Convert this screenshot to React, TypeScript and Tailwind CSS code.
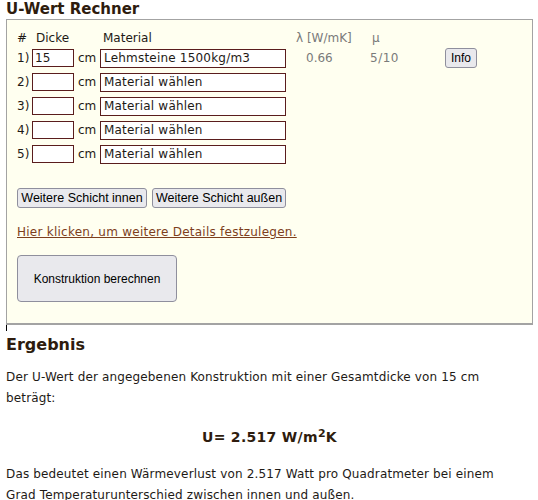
import React from "react";

const font = { fontFamily: '"DejaVu Sans", Verdana, sans-serif' };
const btnFont = { fontFamily: '"Liberation Sans", Arial, sans-serif' };

function Row({ n, value, material, lambda, mu, info }: { n: number; value: string; material: string; lambda?: string; mu?: string; info?: boolean }) {
  return (
    <div className="flex h-[24px] items-center text-[12px] text-[#1e1a16]">
      <div className="w-[15px] text-left">{n})</div>
      <div className="flex h-[18px] w-[42px] items-center border border-[#5a1d1d] bg-white px-[2px] text-[12px]">{value}</div>
      <div className="w-[26px] pl-[4px]">cm</div>
      <div className="flex h-[19px] w-[186px] items-center border border-[#5a1d1d] bg-white px-[3px] text-[12px] tracking-[0.2px]">{material}</div>
      <div className="w-[84px] pl-[20px] text-[#7a7a7a]">{lambda ?? ""}</div>
      <div className="w-[75px] text-[#7a7a7a] tracking-[0.5px]">{mu ?? ""}</div>
      {info && (
        <div className="flex h-[20px] w-[32px] items-center justify-center rounded-[3px] border border-[#8f8f9d] bg-[#e9e9ed] text-[12px] text-black" style={btnFont}>
          Info
        </div>
      )}
    </div>
  );
}

export default function App() {
  return (
    <div className="h-[500px] w-[538px] overflow-hidden bg-white pl-[6px] text-[#1e1a16]" style={font}>
      <h1 className="h-[19px] text-[15px] font-bold leading-[19px] text-[#2e1c0e]">U-Wert Rechner</h1>
      <div className="w-[527px] border border-b-2 border-[#a3a3a3] bg-[#fffff0] pb-[21px] pl-[10px] pt-[10px]">
        <div className="flex h-[16px] items-center text-[12px] text-[#1e1a16]">
          <div className="w-[19px]">#</div>
          <div className="w-[67px]">Dicke</div>
          <div className="w-[193px]">Material</div>
          <div className="w-[76px] text-[#7a7a7a]">λ [W/mK]</div>
          <div className="text-[#7a7a7a]">µ</div>
        </div>
        <Row n={1} value="15" material="Lehmsteine 1500kg/m3" lambda="0.66" mu="5/10" info />
        <Row n={2} value="" material="Material wählen" />
        <Row n={3} value="" material="Material wählen" />
        <Row n={4} value="" material="Material wählen" />
        <Row n={5} value="" material="Material wählen" />
        <div className="mt-[22px] flex gap-[5px]" style={btnFont}>
          <div className="flex h-[20px] w-[130px] items-center justify-center whitespace-nowrap rounded-[3px] border border-[#8f8f9d] bg-[#e9e9ed] text-[12.5px] text-black">Weitere Schicht innen</div>
          <div className="flex h-[20px] w-[134px] items-center justify-center whitespace-nowrap rounded-[3px] border border-[#8f8f9d] bg-[#e9e9ed] text-[12.5px] text-black">Weitere Schicht außen</div>
        </div>
        <div className="mt-[16px] h-[16px] text-[12px] leading-[16px] tracking-[0.25px] text-[#7d3e1c] underline">Hier klicken, um weitere Details festzulegen.</div>
        <div className="mt-[15px] flex h-[47px] w-[160px] items-center justify-center rounded-[4px] border border-[#8f8f9d] bg-[#e9e9ed] text-[12px] text-black" style={btnFont}>
          Konstruktion berechnen
        </div>
      </div>
      <div className="h-[6px] w-[1px] bg-black" />
      <h2 className="mt-[4px] h-[20px] text-[16px] font-bold leading-[20px] text-[#2e1c0e]">Ergebnis</h2>
      <p className="mt-[12px] w-[505px] text-[12px] leading-[21px] tracking-[0.15px]">Der U-Wert der angegebenen Konstruktion mit einer Gesamtdicke von 15 cm beträgt:</p>
      <div className="mt-[18px] w-[527px] text-center text-[14px] font-bold leading-[20px] tracking-[0.3px] text-[#2e1c0e]">
        U= 2.517 W/m<sup className="text-[11px]">2</sup>K
      </div>
      <p className="mt-[17px] w-[505px] text-[12px] leading-[21px] tracking-[0.15px]">Das bedeutet einen Wärmeverlust von 2.517 Watt pro Quadratmeter bei einem Grad Temperaturunterschied zwischen innen und außen.</p>
    </div>
  );
}
